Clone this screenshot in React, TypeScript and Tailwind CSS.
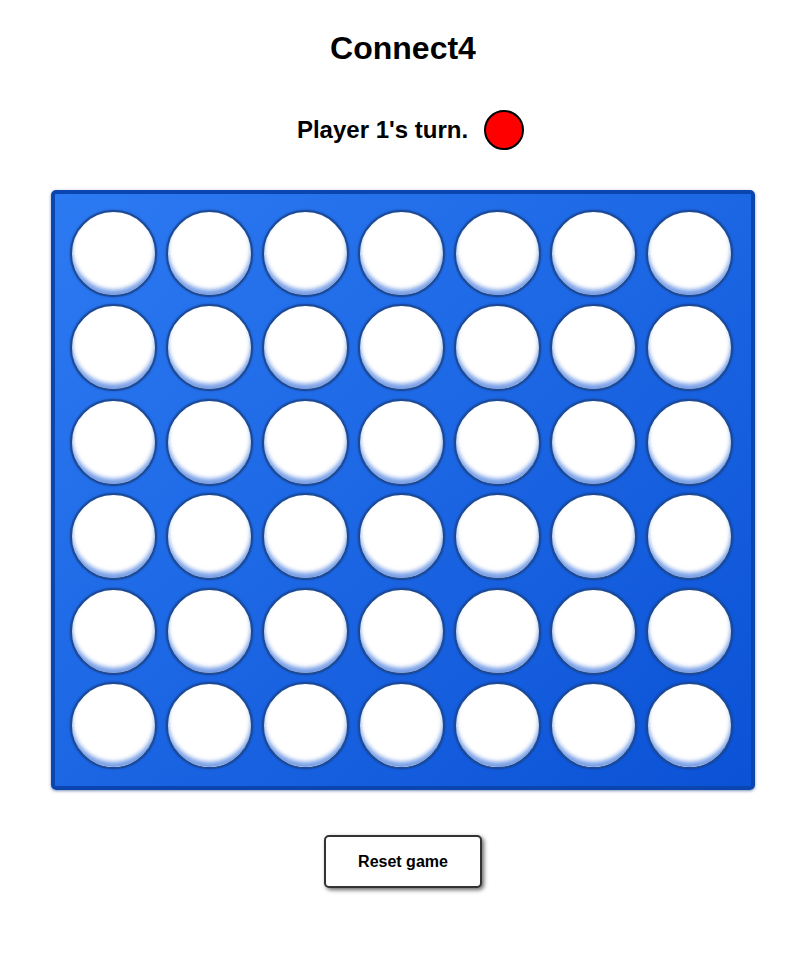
import React from "react";

export default function App() {
  const rows = 6;
  const cols = 7;
  const cells = Array.from({ length: rows * cols }, (_, i) => i);
  return (
    <div className="min-h-[968px] w-full bg-white flex flex-col items-center text-black" style={{ fontFamily: '"Liberation Sans", Arial, sans-serif' }}>
      <h1 className="mt-[30px] text-[32px] leading-[37px] font-bold">Connect4</h1>
      <div className="mt-[43px] flex items-center h-[40px] pl-[15px]">
        <span className="text-[24px] leading-[28px] font-bold">Player 1's turn.</span>
        <span className="ml-[16px] w-[40px] h-[40px] rounded-full bg-[#ff0000] border-2 border-black box-border" />
      </div>
      <div className="mt-[40px] w-[704px] h-[600px] box-border rounded-[5px] border-[4px] border-[#0b46b0] bg-gradient-to-br from-[#2c7af2] to-[#0b52d6] shadow-[0_1px_3px_rgba(0,40,120,0.5)] pt-[16px] pl-[15px]">
        <div className="grid grid-cols-[repeat(7,87px)] grid-rows-[repeat(6,87px)] gap-x-[9px] gap-y-[7.4px]">
          {cells.map((i) => (
            <div
              key={i}
              className="w-[87px] h-[87px] rounded-full bg-white box-border border-2 border-[#1d4a94] shadow-[inset_0_-5px_4px_rgba(30,95,215,0.6),inset_0_2px_2px_rgba(255,255,255,1),0_0_2px_rgba(0,30,100,0.5)]"
            />
          ))}
        </div>
      </div>
      <button className="mt-[45px] w-[158px] h-[53px] box-border rounded-[5px] border-2 border-[#333] bg-white text-[16px] font-bold shadow-[2px_2px_4px_rgba(0,0,0,0.6)]">
        Reset game
      </button>
    </div>
  );
}
